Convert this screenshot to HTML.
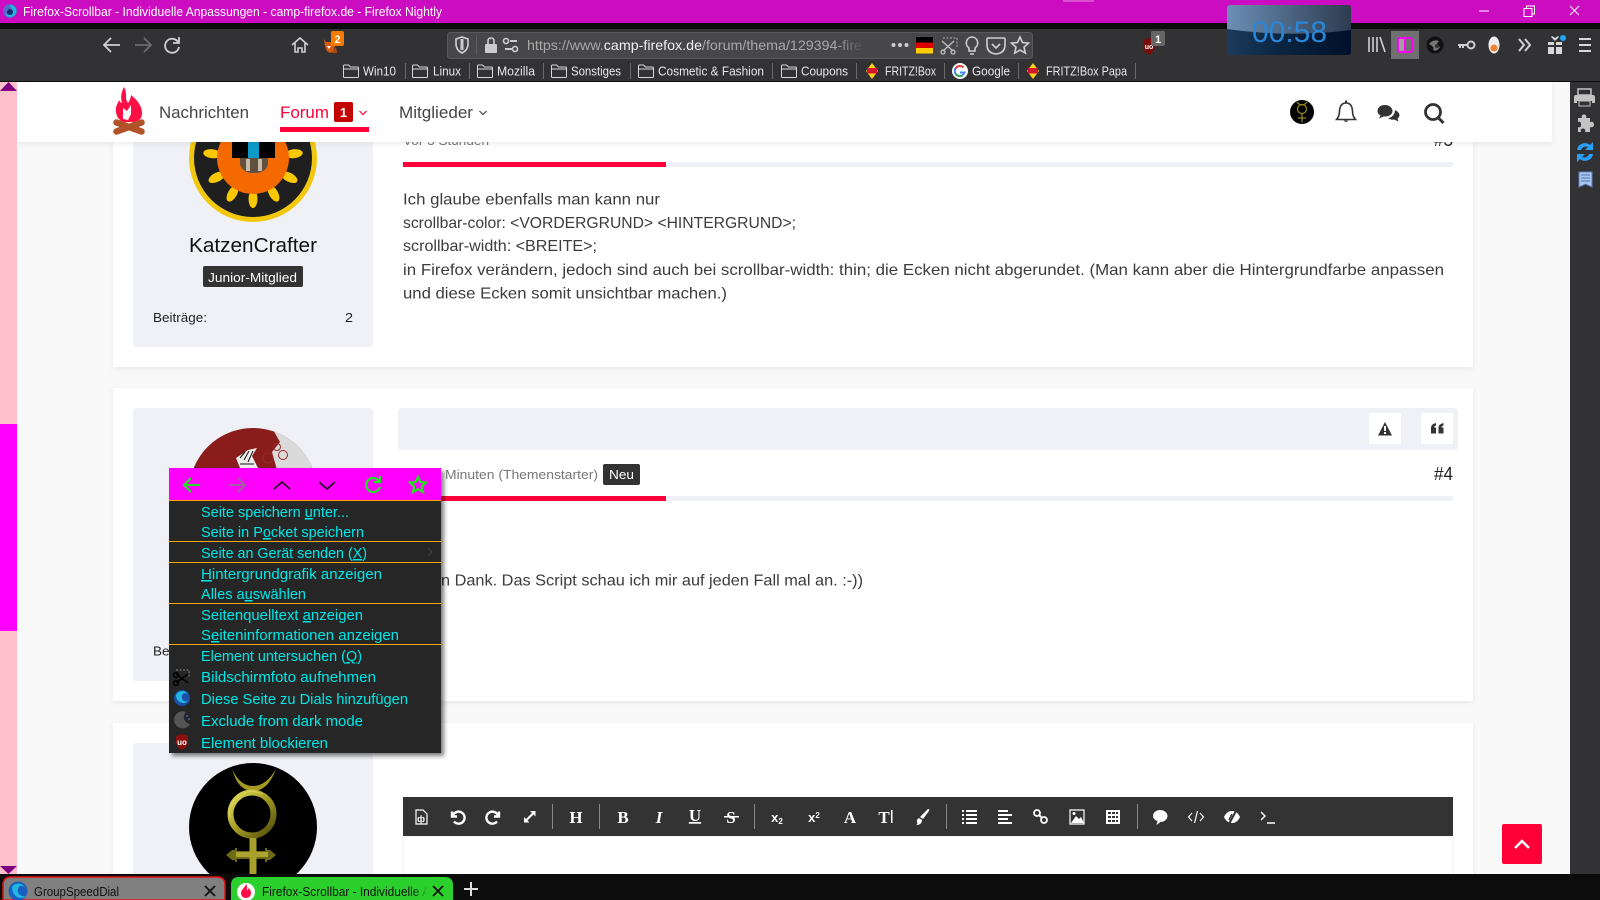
<!DOCTYPE html>
<html><head><meta charset="utf-8"><title>Firefox-Scrollbar</title>
<style>
html,body{margin:0;padding:0;width:1600px;height:900px;overflow:hidden;background:#f9f9fa}
svg{display:block;position:absolute;left:0;top:0}
text{font-family:"Liberation Sans",sans-serif;white-space:pre}
.b{font-size:16px;fill:#3c3c3c}
.m{font-size:15px;fill:#00e8e8}
.bm{font-size:13px;fill:#e8e8e8}
.ed{font-family:"Liberation Serif",serif;font-weight:bold;fill:#fff;font-size:17px;text-anchor:middle}
.ti{fill:none;stroke:#d0d0d0;stroke-width:1.6}
.fo{fill:none;stroke:#d8d8d8;stroke-width:1}
.ei{fill:none;stroke:#fff;stroke-width:2}
</style></head><body>
<svg width="1600" height="900" viewBox="0 0 1600 900" xmlns="http://www.w3.org/2000/svg">
<defs>
<linearGradient id="fade" x1="0" x2="1"><stop offset="0" stop-color="#474749" stop-opacity="0"/><stop offset="1" stop-color="#474749"/></linearGradient>
<linearGradient id="tb" x1="0" x2="1"><stop offset="0" stop-color="#1c3a5c"/><stop offset=".45" stop-color="#0a2440"/><stop offset="1" stop-color="#00102a"/></linearGradient>
<linearGradient id="tg" x1="0" x2="1"><stop offset="0" stop-color="#6b8fb5"/><stop offset="1" stop-color="#2d3b50"/></linearGradient>
<linearGradient id="gold" x1="0" x2="1" y1="0" y2="1"><stop offset="0" stop-color="#e6de60"/><stop offset=".5" stop-color="#a39a22"/><stop offset="1" stop-color="#4f4a0c"/></linearGradient>
<linearGradient id="tabf" x1="0" x2="1"><stop offset="0" stop-color="#2cd02c" stop-opacity="0"/><stop offset=".8" stop-color="#2cd02c"/></linearGradient>
<filter id="sh" x="-5%" y="-5%" width="115%" height="115%"><feDropShadow dx="3" dy="3" stdDeviation="2" flood-color="#000" flood-opacity=".5"/></filter>
<filter id="sh2" x="-2%" y="-20%" width="104%" height="150%"><feDropShadow dx="0" dy="2" stdDeviation="3" flood-color="#000" flood-opacity=".07"/></filter>
<clipPath id="c2"><circle cx="253" cy="492" r="64"/></clipPath>
<clipPath id="c3"><circle cx="253" cy="827" r="64"/></clipPath>
<symbol id="folder" viewBox="0 0 16 14" overflow="visible"><path class="fo" d="M.5 12.5V2q0-1 1-1h4l2 2h7q1 0 1 1v8.500q0 1-1 1h-13q-1 0-1-1zM.5 5h15"/></symbol>
<symbol id="fritz" viewBox="0 0 16 16"><path d="M8 0L14 8 8 16 2 8z" fill="#f7d317"/><rect x="3" y="5" width="10" height="5.500" fill="#d4182c"/></symbol>
</defs>

<!-- page -->
<rect x="17" y="82" width="1553" height="792" fill="#f9f9fa"/>

<!-- card 1 -->
<rect x="113" y="60" width="1360" height="307" fill="#fff" filter="url(#sh2)"/>
<rect x="133" y="100" width="240" height="247" rx="3" fill="#f0f1f6"/>
<circle cx="253" cy="158" r="64" fill="#f2c80e"/>
<circle cx="253" cy="158" r="59" fill="#1f1f1f"/>
<g fill="#f9c800">
<ellipse cx="253" cy="199" rx="4.500" ry="9"/>
<ellipse cx="253" cy="199" rx="4.500" ry="9" transform="rotate(30 253 158)"/>
<ellipse cx="253" cy="199" rx="4.500" ry="9" transform="rotate(62 253 158)"/>
<ellipse cx="253" cy="199" rx="4.500" ry="9" transform="rotate(96 253 158)"/>
<ellipse cx="253" cy="199" rx="4.500" ry="9" transform="rotate(128 253 158)"/>
<ellipse cx="253" cy="199" rx="4.500" ry="9" transform="rotate(-30 253 158)"/>
<ellipse cx="253" cy="199" rx="4.500" ry="9" transform="rotate(-62 253 158)"/>
<ellipse cx="253" cy="199" rx="4.500" ry="9" transform="rotate(-96 253 158)"/>
<ellipse cx="253" cy="199" rx="4.500" ry="9" transform="rotate(-128 253 158)"/>
</g>
<circle cx="253" cy="158" r="36" fill="#f56a00"/>
<rect x="232" y="130" width="43" height="28" fill="#000"/>
<rect x="248" y="130" width="11" height="28" fill="#0c9ac8"/>
<path d="M240 158h28v6q-2 9-14 9t-14-9z" fill="#5f5040"/>
<rect x="246" y="159" width="4" height="12" fill="#c8bba8"/><rect x="258" y="159" width="4" height="12" fill="#c8bba8"/>
<text x="189" y="252" font-size="20" fill="#111" textLength="128" lengthAdjust="spacingAndGlyphs">KatzenCrafter</text>
<rect x="203" y="266" width="100" height="21" rx="2" fill="#333"/>
<text x="208" y="282" font-size="13" fill="#fff" textLength="89" lengthAdjust="spacingAndGlyphs">Junior-Mitglied</text>
<text x="153" y="322" font-size="13" fill="#222" textLength="54" lengthAdjust="spacingAndGlyphs">Beiträge:</text>
<text x="345" y="322" font-size="13" fill="#222" textLength="8" lengthAdjust="spacingAndGlyphs">2</text>
<text x="403" y="145" font-size="13" fill="#777" textLength="86" lengthAdjust="spacingAndGlyphs">Vor 3 Stunden</text>
<text x="1434" y="146" font-size="18" fill="#222" textLength="19" lengthAdjust="spacingAndGlyphs">#3</text>
<rect x="403" y="162" width="1050" height="5" fill="#f0f1f6"/>
<rect x="403" y="162" width="263" height="5" fill="#ff0038"/>
<text class="b" x="403" y="204.500" textLength="257" lengthAdjust="spacingAndGlyphs">Ich glaube ebenfalls man kann nur</text>
<text class="b" x="403" y="228" textLength="393" lengthAdjust="spacingAndGlyphs">scrollbar-color: &lt;VORDERGRUND&gt; &lt;HINTERGRUND&gt;;</text>
<text class="b" x="403" y="251" textLength="194" lengthAdjust="spacingAndGlyphs">scrollbar-width: &lt;BREITE&gt;;</text>
<text class="b" x="403" y="275" textLength="1041" lengthAdjust="spacingAndGlyphs">in Firefox verändern, jedoch sind auch bei scrollbar-width: thin; die Ecken nicht abgerundet. (Man kann aber die Hintergrundfarbe anpassen</text>
<text class="b" x="403" y="298.500" textLength="324" lengthAdjust="spacingAndGlyphs">und diese Ecken somit unsichtbar machen.)</text>

<!-- card 2 -->
<rect x="113" y="388" width="1360" height="313" fill="#fff" filter="url(#sh2)"/>
<rect x="133" y="408" width="240" height="273" rx="3" fill="#f0f1f6"/>
<g clip-path="url(#c2)">
<rect x="189" y="428" width="128" height="128" fill="#8a1c1c"/>
<path d="M272 428L280 442 272 452 277 470H320V428z" fill="#dadada"/>
<circle cx="277" cy="447" r="3.500" fill="none" stroke="#9a2a2a"/><circle cx="268" cy="458" r="5" fill="none" stroke="#9a2a2a"/><circle cx="283" cy="455" r="4.500" fill="none" stroke="#9a2a2a"/>
<path d="M236 458L248 450 257 448 252 456 258 468H240z" fill="#eee"/>
<path d="M240 458l5-6M244 460l5-9M248 462l5-11M240 464h14" stroke="#111"/>
</g>
<rect x="398" y="408" width="1060" height="42" rx="3" fill="#f0f1f6"/>
<rect x="1369" y="413" width="32" height="31" rx="2" fill="#fff"/>
<rect x="1421" y="413" width="32" height="31" rx="2" fill="#fff"/>
<path d="M1385 422l7 13.500h-14z" fill="#333"/><rect x="1384" y="426" width="2" height="5" fill="#fff"/><rect x="1384" y="432" width="2" height="2" fill="#fff"/>
<path d="M1431 428q0-4 5-5v2.500q-2 .5-2 2h2v6h-5zM1438.500 428q0-4 5-5v2.500q-2 .5-2 2h2v6h-5z" fill="#333"/>
<text x="153" y="655.500" font-size="13" fill="#222" textLength="54" lengthAdjust="spacingAndGlyphs">Beiträge:</text>
<text x="445" y="479" font-size="13" fill="#777" textLength="153" lengthAdjust="spacingAndGlyphs">Minuten (Themenstarter)</text>
<rect x="603" y="464" width="37" height="21" rx="2" fill="#333"/>
<text x="609" y="479" font-size="13" fill="#fff" textLength="25" lengthAdjust="spacingAndGlyphs">Neu</text>
<text x="1434" y="480" font-size="18" fill="#222" textLength="19" lengthAdjust="spacingAndGlyphs">#4</text>
<rect x="403" y="496" width="1050" height="5" fill="#f0f1f6"/>
<rect x="403" y="496" width="263" height="5" fill="#ff0038"/>
<text class="b" x="441" y="585.500" textLength="422" lengthAdjust="spacingAndGlyphs">n Dank. Das Script schau ich mir auf jeden Fall mal an. :-))</text>

<!-- card 3 -->
<rect x="113" y="723" width="1360" height="160" fill="#fff" filter="url(#sh2)"/>
<rect x="133" y="743" width="240" height="140" rx="3" fill="#f0f1f6"/>
<circle cx="253" cy="827" r="64" fill="#000"/>
<g clip-path="url(#c3)">
<path d="M232 769Q240 786 253 786 266 786 276 769 268 791 253 791 238 791 232 769z" fill="#a39a22"/>
<circle cx="252" cy="814" r="21.500" fill="none" stroke="url(#gold)" stroke-width="6"/>
<circle cx="252" cy="814" r="22.500" fill="none" stroke="#d8d050" stroke-width="1.200" stroke-dasharray="50 100" transform="rotate(170 252 814)"/>
<path d="M226 855l6-5h3v-2h2v3h28v-3h2v2h3l6 5-6 5h-3v2h-2v-3h-28v3h-2v-2h-3z" fill="#6f6a16"/>
<rect x="236" y="852" width="32" height="5" fill="#aca330"/>
<rect x="249.500" y="838" width="7" height="40" fill="#a8a02a"/>
</g>
<rect x="403" y="836" width="1050" height="50" fill="#fff" stroke="#f0f0f0"/>
<rect x="403" y="797" width="1050" height="39" fill="#333"/>
<!-- editor icons -->
<g fill="#fff">
<path class="ei" style="stroke-width:1.200" d="M416 810h7l4 4v10h-11z"/><text x="421" y="822" font-size="9" font-weight="bold" text-anchor="middle">ф</text>
<path class="ei" style="stroke-width:2.400" d="M452 811.500v5h5M453 815.500a6 6 0 1 1 1 6"/>
<path class="ei" style="stroke-width:2.400" d="M499 811.500v5h-5M498 815.500a6 6 0 1 0-1 6"/>
<path d="M530 811h5.500v5.500l-2-2-6 6 2 2H524v-5.500l2 2 6-6z"/>
<rect x="552" y="804" width="1" height="25" fill="#888"/>
<text class="ed" x="576" y="823">H</text>
<rect x="599" y="804" width="1" height="25" fill="#888"/>
<text class="ed" x="623" y="823">B</text>
<text class="ed" x="659" y="823" font-style="italic">I</text>
<text class="ed" x="695" y="821" font-size="16" text-decoration="underline">U</text>
<text class="ed" x="731" y="823" font-weight="normal">S</text><rect x="724" y="816" width="15" height="1.500"/>
<rect x="754" y="804" width="1" height="25" fill="#888"/>
<text x="777" y="822" font-size="13" font-weight="bold" text-anchor="middle">x<tspan font-size="8" dy="2">2</tspan></text>
<text x="814" y="822" font-size="13" font-weight="bold" text-anchor="middle">x<tspan font-size="8" dy="-4">2</tspan></text>
<text class="ed" x="850" y="823">A</text>
<text class="ed" x="884" y="823" font-weight="normal">T</text><rect x="891" y="810" width="1.500" height="13"/>
<path d="M928 809q2 0 1 2l-6 8-3-2zM919 818l3 2q0 5-6 5 2-1 1-3t2-4z"/>
<rect x="946" y="804" width="1" height="25" fill="#888"/>
<path d="M962 810h2v2h-2zM966 810h11v2h-11zM962 814h2v2h-2zM966 814h11v2h-11zM962 818h2v2h-2zM966 818h11v2h-11zM962 822h2v2h-2zM966 822h11v2h-11z"/>
<path d="M998 810h10v2h-10zM998 814h14v2h-14zM998 818h10v2h-10zM998 822h14v2h-14z"/>
<circle cx="1037" cy="813" r="3" class="ei" style="stroke-width:1.800"/><circle cx="1044" cy="820" r="3" class="ei" style="stroke-width:1.800"/><path class="ei" d="M1039 815l3 3"/>
<path class="ei" style="stroke-width:1.200" d="M1070 810h14v14h-14z"/><path d="M1071 823l5-7 3 3 2-2 3 6z"/><circle cx="1074" cy="813.500" r="1.500"/>
<path d="M1106 810h14v14h-14zM1108 812v2h3v-2zM1112 812v2h3v-2zM1116 812v2h2v-2zM1108 816v2h3v-2zM1112 816v2h3v-2zM1116 816v2h2v-2zM1108 820v2h3v-2zM1112 820v2h3v-2zM1116 820v2h2v-2z" fill-rule="evenodd"/>
<rect x="1137" y="804" width="1" height="25" fill="#888"/>
<path d="M1160 810c4.500 0 7.500 3 7.500 6s-3 6-7 6l-4 3 1-4c-3-1-4.500-3-4.500-5 0-3 3-6 7-6z"/>
<path class="ei" style="stroke-width:1.200" d="M1192 813l-3.500 4 3.500 4M1200 813l3.500 4-3.500 4M1197.500 811l-3 12"/>
<path d="M1232 811c-5 0-7 4-8 6 1 2 3 6 8 6s7-4 8-6c-1-2-3-6-8-6z"/><path d="M1237 809l-8 15" stroke="#333" stroke-width="2"/><path d="M1232 814l-3 6" stroke="#333" stroke-width="1.500"/>
<path class="ei" style="stroke-width:1.400" d="M1261 812l4 4-4 4M1267 823h8"/>
</g>

<!-- scroll top -->
<rect x="1502" y="824" width="40" height="40" rx="2" fill="#ff0038"/>
<path d="M1515 848l7-7 7 7" fill="none" stroke="#fff" stroke-width="2.500"/>

<!-- header -->
<rect x="17" y="82" width="1535" height="60" fill="#fff" filter="url(#sh2)"/>
<path d="M124 87C128 94 124 98 128 103 130 100 131 97 131 95 140 102 144 110 141 118L137 122H122L118 118C113 108 118 104 119 100 120 102 121 103 122 103 120 96 122 91 124 87z" fill="#ff0f46"/>
<path d="M123 119V108L127 111 131 105V114L128 120z" fill="#fff"/>
<path d="M116.500 122.500L141.500 131.500" stroke="#b25229" stroke-width="6.500" stroke-linecap="round"/>
<path d="M141.500 122.500L116.500 131.500" stroke="#b25229" stroke-width="6.500" stroke-linecap="round"/>
<text x="159" y="118" font-size="17" fill="#444" textLength="90" lengthAdjust="spacingAndGlyphs">Nachrichten</text>
<text x="280" y="118" font-size="17" fill="#ff0038" textLength="49" lengthAdjust="spacingAndGlyphs">Forum</text>
<rect x="334" y="102" width="19" height="20" rx="2" fill="#c40000"/>
<text x="343.500" y="117" font-size="13" font-weight="bold" fill="#fff" text-anchor="middle">1</text>
<path d="M359.500 111l3.500 3.500 3.500-3.500" fill="none" stroke="#ff0038" stroke-width="1.200"/>
<rect x="280" y="127" width="89" height="5" fill="#ff0038"/>
<text x="399" y="118" font-size="17" fill="#444" textLength="74" lengthAdjust="spacingAndGlyphs">Mitglieder</text>
<path d="M479.500 111l3.500 3.500 3.500-3.500" fill="none" stroke="#444" stroke-width="1.200"/>
<circle cx="1302" cy="112" r="12" fill="#000"/>
<g fill="none" stroke="#8d8520" stroke-width="1.300"><path d="M1297 102q5 6 10 0"/><circle cx="1302" cy="109" r="4.500"/><path d="M1302 113.500v9M1298 118h8"/></g>
<path d="M1346 103q-6 0-6.500 8c0 6-2 7-3 8.500h19c-1-1.500-3-2.500-3-8.500q-.5-8-6.500-8z" fill="none" stroke="#333" stroke-width="1.600"/><path d="M1346 100.500v3" stroke="#333" stroke-width="2"/><path d="M1343.500 120.500q2.500 3 5 0z" fill="#333"/>
<path d="M1385 105c-5 0-7.500 3-7.500 6 0 2 1 3.500 3 4.500l-1.500 3 4.500-2c6 .5 9-2.500 9-5.500s-3-6-7.500-6z" fill="#333"/>
<path d="M1395 110c2 1 4.500 3 4.500 5 0 1.500-1 3-2 3.500l1 3-4.500-2c-2 .5-4 0-6-1.500 3 0 7-3 7-8z" fill="#333"/>
<circle cx="1433" cy="112" r="7.500" fill="none" stroke="#333" stroke-width="2.800"/><path d="M1438.500 118l5 5" stroke="#333" stroke-width="3"/>

<!-- left scrollbar -->
<rect x="0" y="82" width="17" height="792" fill="#ffc0cb"/>
<rect x="0" y="424" width="17" height="207" fill="#ff00ff"/>
<path d="M0 91L8.500 82 17 91z" fill="#800080"/>
<path d="M0 866h17l-8.500 8z" fill="#800080"/>

<!-- right sidebar -->
<rect x="1570" y="82" width="30" height="792" fill="#323234"/>
<g fill="#c4c4c4">
<g transform="translate(0 1)"><path d="M1578 88h13v6h-13z" fill="none" stroke="#c4c4c4" stroke-width="1.500"/><path d="M1576 94h17q2 0 2 2v6h-3v-2h-15v2h-3v-6q0-2 2-2z"/><rect x="1579" y="100" width="11" height="5" fill="none" stroke="#c4c4c4"/></g>
<path transform="translate(-1 2)" d="M1579 116h4c-1-3 1-3.500 2-3.500s3 .5 2 3.500h4v4c3-1 4 1 4 2.500s-1 3.500-4 2.500v5h-5c1-3-1-3.500-2-3.500s-3 .5-2 3.500h-3v-5c3 1 3-1 3-2.500s0-3.500-3-2.500z"/>
</g>
<path transform="translate(0 -1)" d="M1577 151a8 8 0 0 1 13-5l3-3v8h-8l3-3a5 5 0 0 0-7 3zM1593 155a8 8 0 0 1-13 5l-3 3v-8h8l-3 3a5 5 0 0 0 7-3z" fill="#28a0ff"/>
<path d="M1579 172h13v15l-6.500-3-6.500 3z" fill="#a8c8f0" stroke="#6080c0"/><path d="M1581 175h9M1581 178h9M1581 181h9" stroke="#5070b0"/>

<!-- browser chrome -->
<rect x="0" y="0" width="1600" height="23" fill="#cc0cc0"/>
<rect x="1063" y="0" width="31" height="2" fill="#d84ecf"/>
<rect x="0" y="23" width="1600" height="6" fill="#0c0c0c"/>
<rect x="0" y="29" width="1600" height="52" fill="#323234"/>
<rect x="0" y="81" width="1600" height="1" fill="#0c0c0c"/>
<circle cx="10" cy="11" r="7" fill="#5a66c8"/><path d="M10 5a6 6 0 1 1-5 9c3 1 6 0 7-3 0-3-3-5-2-6z" fill="#20b8e0"/><circle cx="10" cy="12" r="3" fill="#1a2a70"/>
<text x="23" y="16" font-size="13" fill="#fff" textLength="419" lengthAdjust="spacingAndGlyphs">Firefox-Scrollbar - Individuelle Anpassungen - camp-firefox.de - Firefox Nightly</text>
<path d="M1479 11h10" stroke="#fff"/>
<path d="M1524 8.500h8v8h-8zM1526.500 8.500v-2.500h8v8h-2.500" fill="none" stroke="#fff"/>
<path d="M1570 6l9 9M1579 6l-9 9" stroke="#fff" stroke-width="1"/>
<!-- nav -->
<path class="ti" d="M120 45h-15M111 38l-7 7 7 7" style="stroke-width:1.800"/>
<path d="M135 45h15M144 38l7 7-7 7" fill="none" stroke="#6c6c6e" stroke-width="1.800"/>
<path class="ti" style="stroke-width:1.800" d="M178 42a7 7 0 1 0 1 5M179 37v6h-6"/>
<path class="ti" d="M292 45l8-7 8 7M295 43v9h3v-4h4v4h3v-9"/>
<path d="M324 39l2 3h6l2-3 1 7-2 5-3 2-3-2-2-5z" fill="#d65a10"/><path d="M331 53l5-6 1 6z" fill="#b04a10"/><path d="M327 46l2 3 2-3z" fill="#fff"/>
<rect x="331" y="31" width="13" height="15" rx="2" fill="#f57c00"/>
<text x="337.500" y="43" font-size="11" font-weight="bold" fill="#fff" text-anchor="middle">2</text>
<!-- urlbar -->
<rect x="447.500" y="32.500" width="585" height="26" rx="3" fill="#474749" stroke="#5a5a5c"/>
<path class="ti" d="M456 39l6-2 6 2v5q0 6-6 9-6-3-6-9z"/><path d="M462 39v11" stroke="#ccc" stroke-width="3"/>
<rect x="476" y="36" width="1" height="19" fill="#5e5e60"/>
<rect x="485" y="44" width="12" height="9" rx="1" fill="#ccc"/><path class="ti" d="M488 44v-3q0-3 3-3t3 3v3"/>
<circle cx="506" cy="41" r="2.500" class="ti"/><path d="M510 41h7M505 49h7" stroke="#ccc" stroke-width="2"/><circle cx="515" cy="49" r="2.500" class="ti"/>
<text x="527" y="50" font-size="14" fill="#a8a8a8" textLength="335" lengthAdjust="spacingAndGlyphs">https://www.<tspan fill="#f0f0f0">camp-firefox.de</tspan>/forum/thema/129394-fire</text>
<rect x="835" y="34" width="30" height="23" fill="url(#fade)"/>
<g fill="#ccc"><circle cx="893.500" cy="45" r="2"/><circle cx="900" cy="45" r="2"/><circle cx="906.500" cy="45" r="2"/></g>
<rect x="916" y="37" width="17" height="5.500" fill="#000"/><rect x="916" y="42.500" width="17" height="5.500" fill="#d00"/><rect x="916" y="48" width="17" height="5.500" fill="#fc0"/>
<path d="M943 38h14v9" fill="none" stroke="#aaa" stroke-dasharray="2 1.500"/>
<path d="M942 41l11 10M954 41l-11 10" fill="none" stroke="#bbb" stroke-width="1.400"/><circle cx="943" cy="52" r="2" fill="none" stroke="#bbb" stroke-width="1.400"/><circle cx="953" cy="52" r="2" fill="none" stroke="#bbb" stroke-width="1.400"/>
<path class="ti" d="M972 37a6 6 0 0 0-3 11v3h6v-3a6 6 0 0 0-3-11zM970 54h4"/>
<path class="ti" d="M988 38h16q1 0 1 1v6q0 8-9 9-9-1-9-9v-6q0-1 1-1zM992 44l4 4 4-4"/>
<path class="ti" d="M1020 37l2.500 5.500 6 .6-4.500 4 1.300 6-5.300-3-5.300 3 1.300-6-4.500-4 6-.6z"/>
<!-- ublock + timer -->
<path d="M1143 40l6-2 6 2v6q0 6-6 9-6-3-6-9z" fill="#7a0c0c"/>
<text x="1149" y="49" font-size="7" font-weight="bold" fill="#fff" text-anchor="middle">uo</text>
<rect x="1151" y="31" width="14" height="15" rx="2" fill="#666"/>
<text x="1158" y="43" font-size="11" font-weight="bold" fill="#fff" text-anchor="middle">1</text>
<rect x="1227" y="5" width="124" height="50" rx="3" fill="url(#tb)"/>
<path d="M1227 8q0-3 3-3h118q3 0 3 3v22q-60 8-124-1z" fill="url(#tg)"/>
<text x="1252" y="42" font-size="30" fill="#2a86d6" textLength="75" lengthAdjust="spacingAndGlyphs">00:58</text>
<!-- right tools -->
<path class="ti" d="M1369 37v15M1373 37v15M1377 37v15M1380 37l5 15"/>
<rect x="1391" y="31" width="28" height="28" fill="#707070"/>
<rect x="1398" y="38" width="14" height="14" rx="2" fill="none" stroke="#ff00ff" stroke-width="2"/><path d="M1405 38v14" stroke="#ff00ff" stroke-width="2"/><rect x="1399" y="39" width="5" height="12" fill="#a0a0a0"/>
<circle cx="1435" cy="45" r="8.500" fill="#111"/><path d="M1429 44q4-5 10-3l-3 4 4 2q-3 5-7 3 2-3-4-6z" fill="#777"/><circle cx="1437" cy="46" r="2" fill="#333"/>
<circle cx="1471" cy="45" r="3.500" class="ti" style="stroke-width:2"/><path d="M1458 45h9M1460 45v3M1463 45v3" stroke="#d0d0d0" stroke-width="2"/>
<ellipse cx="1494" cy="45" rx="5.500" ry="8.500" fill="#eee"/><circle cx="1494" cy="48" r="3.500" fill="#f08030"/>
<path class="ti" style="stroke-width:2" d="M1519 39l5 6-5 6M1525 39l5 6-5 6"/>
<path d="M1548 42h6v3h-6zM1556 42h6v3h-6zM1548 47h6v7h-6zM1556 47h6v7h-6zM1551 37l4 4 4-4-1-1-3 2-3-2z" fill="#d8d8d8"/>
<circle cx="1563" cy="38" r="3" fill="#1ea8ff"/>
<path d="M1579 39h12M1579 45h12M1579 51h12" stroke="#d8d8d8" stroke-width="2"/>
<!-- bookmarks -->
<g>
<use href="#folder" x="343" y="64" width="16" height="14"/><text class="bm" x="363" y="75.500" textLength="33" lengthAdjust="spacingAndGlyphs">Win10</text>
<use href="#folder" x="412" y="64" width="16" height="14"/><text class="bm" x="433" y="75.500" textLength="28" lengthAdjust="spacingAndGlyphs">Linux</text>
<use href="#folder" x="477" y="64" width="16" height="14"/><text class="bm" x="497" y="75.500" textLength="38" lengthAdjust="spacingAndGlyphs">Mozilla</text>
<use href="#folder" x="551" y="64" width="16" height="14"/><text class="bm" x="571" y="75.500" textLength="50" lengthAdjust="spacingAndGlyphs">Sonstiges</text>
<use href="#folder" x="638" y="64" width="16" height="14"/><text class="bm" x="658" y="75.500" textLength="106" lengthAdjust="spacingAndGlyphs">Cosmetic &amp; Fashion</text>
<use href="#folder" x="781" y="64" width="16" height="14"/><text class="bm" x="801" y="75.500" textLength="47" lengthAdjust="spacingAndGlyphs">Coupons</text>
<use href="#fritz" x="864" y="63" width="16" height="16"/><text class="bm" x="885" y="75.500" textLength="51" lengthAdjust="spacingAndGlyphs">FRITZ!Box</text>
<circle cx="960" cy="71" r="8" fill="#fff"/>
<path d="M960 66a5 5 0 1 0 4.500 6.500H960" fill="none" stroke="#4285f4" stroke-width="2"/><path d="M955.600 68.500a5 5 0 0 1 7.900-1" fill="none" stroke="#ea4335" stroke-width="2"/><path d="M955.500 73.500a5 5 0 0 0 7 2" fill="none" stroke="#34a853" stroke-width="2"/>
<text class="bm" x="972" y="75.500" textLength="38" lengthAdjust="spacingAndGlyphs">Google</text>
<use href="#fritz" x="1025" y="63" width="16" height="16"/><text class="bm" x="1046" y="75.500" textLength="81" lengthAdjust="spacingAndGlyphs">FRITZ!Box Papa</text>
<g fill="#6a6a6c"><rect x="405" y="63" width="1" height="16"/><rect x="469" y="63" width="1" height="16"/><rect x="543" y="63" width="1" height="16"/><rect x="630" y="63" width="1" height="16"/><rect x="772" y="63" width="1" height="16"/><rect x="856" y="63" width="1" height="16"/><rect x="944" y="63" width="1" height="16"/><rect x="1018" y="63" width="1" height="16"/><rect x="1135" y="63" width="1" height="16"/></g>
</g>

<!-- tabs -->
<rect x="0" y="874" width="1600" height="26" fill="#0c0c0c"/>
<path d="M3 900v-15q0-8 8-8h206q8 0 8 8v15z" fill="#808080" stroke="#e01010" stroke-width="1.500"/>
<circle cx="18" cy="891" r="9.500" fill="#1a60c0"/><path d="M12 887a8 8 0 0 1 13 0c-5-3-8 0-7 5 1 3 4 5 8 4-4 4-14 2-14-9z" fill="#20b8e0"/>
<text x="34" y="896" font-size="13" fill="#111" textLength="85" lengthAdjust="spacingAndGlyphs">GroupSpeedDial</text>
<path d="M205 886l10 10M215 886l-10 10" stroke="#111" stroke-width="1.800"/>
<path d="M231 900v-15q0-8 8-8h206q8 0 8 8v15z" fill="#2cd02c"/>
<circle cx="246" cy="892" r="9" fill="#fff"/>
<path d="M246 883c1 3-5 6-5 10 0 3 2 5 5 5s5-2 5-5c0-2-1-4-2.500-5 0 1-.5 2-1.500 2.500 .5-3 0-5-1-7.500z" fill="#ff0f46"/>
<text x="262" y="896" font-size="13" fill="#111" textLength="168" lengthAdjust="spacingAndGlyphs">Firefox-Scrollbar - Individuelle A</text>
<rect x="412" y="880" width="20" height="18" fill="url(#tabf)"/>
<path d="M433 886l10 10M443 886l-10 10" stroke="#111" stroke-width="1.800"/>
<path d="M471 882v14M464 889h14" stroke="#ddd" stroke-width="2"/>

<!-- context menu -->
<g filter="url(#sh)">
<rect x="169" y="468" width="272" height="285" fill="#262626"/>
</g>
<rect x="169" y="468" width="272" height="32" fill="#ff00ff"/>
<rect x="169" y="500" width="272" height="1" fill="#ffa500"/>
<path d="M200 485h-15M191 478l-7 7 7 7" fill="none" stroke="#1ee61e" stroke-width="2"/>
<path d="M229 485h15M238 478l7 7-7 7" fill="none" stroke="#a060a0" stroke-width="2"/>
<path d="M274 489l8-7 8 7" fill="none" stroke="#111" stroke-width="1.500"/>
<path d="M319 482l8 7 8-7" fill="none" stroke="#111" stroke-width="1.500"/>
<path d="M379 481a7 7 0 1 0 1 6M380 476v6h-6" fill="none" stroke="#1ee61e" stroke-width="2.200"/>
<path d="M418 477l2.300 5 5.700.6-4.200 3.800 1.200 5.600-5-2.900-5 2.900 1.200-5.600-4.200-3.800 5.700-.6z" fill="none" stroke="#1ee61e" stroke-width="2.200"/>
<g fill="#ffa500"><rect x="169" y="541" width="272" height="1"/><rect x="169" y="562" width="272" height="1"/><rect x="169" y="603" width="272" height="1"/><rect x="169" y="644" width="272" height="1"/></g>
<text class="m" x="201" y="517" textLength="148" lengthAdjust="spacingAndGlyphs">Seite speichern <tspan text-decoration="underline">u</tspan>nter...</text>
<text class="m" x="201" y="537" textLength="163" lengthAdjust="spacingAndGlyphs">Seite in P<tspan text-decoration="underline">o</tspan>cket speichern</text>
<text class="m" x="201" y="558" textLength="166" lengthAdjust="spacingAndGlyphs">Seite an Gerät senden (<tspan text-decoration="underline">X</tspan>)</text>
<path d="M428 548l4 4-4 4" fill="none" stroke="#444"/>
<text class="m" x="201" y="579" textLength="181" lengthAdjust="spacingAndGlyphs"><tspan text-decoration="underline">H</tspan>intergrundgrafik anzeigen</text>
<text class="m" x="201" y="599" textLength="105" lengthAdjust="spacingAndGlyphs">Alles a<tspan text-decoration="underline">u</tspan>swählen</text>
<text class="m" x="201" y="620" textLength="162" lengthAdjust="spacingAndGlyphs">Seitenquelltext <tspan text-decoration="underline">a</tspan>nzeigen</text>
<text class="m" x="201" y="640" textLength="198" lengthAdjust="spacingAndGlyphs">S<tspan text-decoration="underline">e</tspan>iteninformationen anzeigen</text>
<text class="m" x="201" y="661" textLength="161" lengthAdjust="spacingAndGlyphs">Element untersuchen (<tspan text-decoration="underline">Q</tspan>)</text>
<text class="m" x="201" y="682" textLength="175" lengthAdjust="spacingAndGlyphs">Bildschirmfoto aufnehmen</text>
<text class="m" x="201" y="704" textLength="207" lengthAdjust="spacingAndGlyphs">Diese Seite zu Dials hinzufügen</text>
<text class="m" x="201" y="726" textLength="162" lengthAdjust="spacingAndGlyphs">Exclude from dark mode</text>
<text class="m" x="201" y="748" textLength="127" lengthAdjust="spacingAndGlyphs">Element blockieren</text>
<path d="M176 670h13v7" fill="none" stroke="#888" stroke-dasharray="2 1.500"/>
<path d="M176 674l12 9M188 674l-12 9" stroke="#000" stroke-width="1.500"/><circle cx="176" cy="675" r="2.500" fill="none" stroke="#000" stroke-width="1.500"/><circle cx="176" cy="683" r="2.500" fill="none" stroke="#000" stroke-width="1.500"/>
<circle cx="182" cy="698" r="8" fill="#1a50a8"/><path d="M176 695a7 7 0 0 1 12-1c-4-2-7 0-6 4 0 3 3 4 6 3-3 4-12 2-12-6z" fill="#20b8e0"/>
<path d="M186 712a8.500 8.500 0 1 0 4 12 7 7 0 0 1-4-12z" fill="#555"/><circle cx="187" cy="716" r=".8" fill="#4a90ff"/><circle cx="189" cy="719" r=".8" fill="#4a90ff"/>
<path d="M176 736l6-2 6 2v5q0 6-6 9-6-3-6-9z" fill="#8a0f0f"/>
<text x="182" y="745" font-size="8" font-weight="bold" fill="#fff" text-anchor="middle">uo</text>
</svg>
</body></html>
